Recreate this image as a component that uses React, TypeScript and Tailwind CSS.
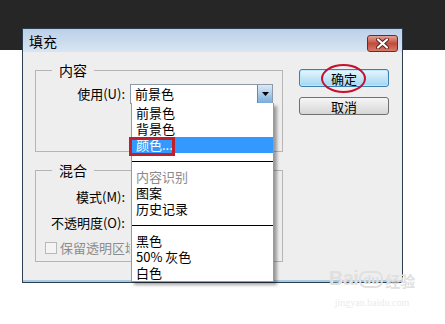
import React from 'react';

const FONT = { fontFamily: '"Noto Sans CJK SC", "Noto Sans", sans-serif' };

const MENU: { label: string; kind?: 'sep' | 'muted' | 'active' }[] = [
  { label: '前景色' },
  { label: '背景色' },
  { label: '颜色...', kind: 'active' },
  { label: '', kind: 'sep' },
  { label: '内容识别', kind: 'muted' },
  { label: '图案' },
  { label: '历史记录' },
  { label: '', kind: 'sep' },
  { label: '黑色' },
  { label: '50% 灰色' },
  { label: '白色' },
];

const CloseButton: React.FC = () => (
  <div className="w-[31px] h-[17px] rounded-[3px] border border-[#6e2b25] bg-gradient-to-b from-[#e0a196] via-[#c44a3c] to-[#d57a68] flex items-center justify-center">
    <svg width="13" height="11" viewBox="0 0 13 11">
      <path d="M2 1.5 L11 9.5 M11 1.5 L2 9.5" stroke="#5a1d18" strokeWidth="4" strokeLinecap="round" />
      <path d="M2 1.5 L11 9.5 M11 1.5 L2 9.5" stroke="#ffffff" strokeWidth="2.2" strokeLinecap="round" />
    </svg>
  </div>
);

const Dropdown: React.FC = () => (
  <div className="absolute left-0 top-full w-[143px] h-[179px] bg-white border border-[#9a9a9a] border-t-0 shadow-[3px_3px_3px_rgba(0,0,0,0.35)] pt-[2px] z-10">
    {MENU.map((item, idx) => {
      if (item.kind === 'sep') {
        return (
          <div key={idx} className="h-[16px] flex items-center">
            <div className="w-full h-px bg-black" />
          </div>
        );
      }
      if (item.kind === 'active') {
        return (
          <div key={idx} className="relative h-[16px] bg-[#3399ff] text-white pl-[4px] leading-[16px]">
            {item.label}
            <div className="absolute left-[-3px] top-[0px] w-[46px] h-[19px] border-[3px] border-[#c01f2b]" />
          </div>
        );
      }
      return (
        <div
          key={idx}
          className={`h-[16px] pl-[4px] leading-[16px] ${item.kind === 'muted' ? 'text-[#8a8a8a]' : 'text-black'}`}
        >
          {item.label}
        </div>
      );
    })}
  </div>
);

const App: React.FC = () => {
  return (
    <div className="relative w-[445px] h-[324px] bg-white overflow-hidden text-[13px]" style={FONT}>
      <div className="h-[50px] bg-[#262626]" />

      {/* dialog window */}
      <div className="absolute left-[22px] top-[28px] w-[381px] h-[255px] border border-[#2d3e50] bg-[#eeeeee] flex flex-col shadow-[inset_0_-2px_0_#a9cbe2]">
        <div className="h-[23px] bg-gradient-to-b from-[#bcd0e9] to-[#d9e5f3] flex items-center justify-between pl-[6px] pr-[4px]">
          <span className="text-[14px] text-black leading-none">填充</span>
          <div className="mt-[6px]">
            <CloseButton />
          </div>
        </div>

        <div className="flex pl-[12px] pt-[10px]">
          <div className="flex flex-col w-[248px] gap-[10px]">
            <fieldset className="border border-[#b5b5b5] h-[90px] px-0">
              <legend className="ml-[16px] px-[7px] leading-[16px] text-[14px]">内容</legend>
              <div className="flex items-center mt-[6px]">
                <div className="w-[89px] text-right">使用(U):</div>
                <div className="relative ml-[5px] w-[143px] h-[20px] bg-white border border-[#8e9aa7] flex items-center">
                  <span className="pl-[4px] flex-1 leading-[18px]">前景色</span>
                  <div className="w-[15px] h-[18px] border-l border-[#5d8bb6] bg-gradient-to-b from-[#dcebf8] to-[#79add9] flex items-center justify-center">
                    <svg width="7" height="4" viewBox="0 0 7 4">
                      <path d="M0 0 H7 L3.5 4 Z" fill="#000" />
                    </svg>
                  </div>
                  <Dropdown />
                </div>
              </div>
            </fieldset>

            <fieldset className="border border-[#b5b5b5] h-[100px] px-0">
              <legend className="ml-[16px] px-[7px] leading-[16px] text-[14px]">混合</legend>
              <div className="flex items-center h-[20px] mt-[9px]">
                <div className="w-[89px] text-right">模式(M):</div>
              </div>
              <div className="flex items-center h-[20px] mt-[6px]">
                <div className="w-[89px] text-right">不透明度(O):</div>
              </div>
              <div className="flex items-center h-[20px] mt-[5px] pl-[9px] gap-[3px] text-[#8c8c8c]">
                <div className="w-[12px] h-[12px] border border-[#b8b8b8] bg-[#f4f4f4]" />
                <span className="w-[70px] overflow-hidden whitespace-nowrap">保留透明区域</span>
              </div>
            </fieldset>
          </div>

          <div className="flex flex-col ml-[16px] pt-[7px] gap-[10px]">
            <div className="relative w-[90px] h-[18px] rounded-[3px] border border-[#3c7fb1] bg-gradient-to-b from-[#eaf6fd] via-[#c4e6f8] to-[#a2d6f2] flex items-center justify-center leading-none shadow-[inset_0_0_0_1px_#bfe6fa]">
              确定
              <div className="absolute left-[21px] top-[-6px] w-[45px] h-[29px] rounded-[50%] border-[2.5px] border-[#c8102e]" />
            </div>
            <div className="w-[90px] h-[18px] rounded-[3px] border border-[#707070] bg-gradient-to-b from-[#f6f6f6] via-[#e6e6e6] to-[#d6d6d6] flex items-center justify-center leading-none">
              取消
            </div>
          </div>
        </div>
      </div>

      {/* watermark */}
      <div className="absolute left-[328px] top-[268px] w-[88px] flex flex-col items-center text-[#e0e0e0]">
        <div className="flex items-end leading-none">
          <span className="text-[20px] font-bold tracking-tight" style={{ fontFamily: '"Liberation Sans", sans-serif' }}>Bai</span>
          <span className="text-[13px] font-bold ml-[1px] px-[2px] rounded-[7px] border-2 border-[#e0e0e0]" style={{ fontFamily: '"Liberation Sans", sans-serif' }}>du</span>
          <span className="text-[15px] font-bold ml-[2px]">经验</span>
        </div>
        <div className="text-[10px] mt-[7px] text-[#ebebeb]" style={{ fontFamily: '"Liberation Serif", serif' }}>jingyan.baidu.com</div>
      </div>
    </div>
  );
};

export default App;
